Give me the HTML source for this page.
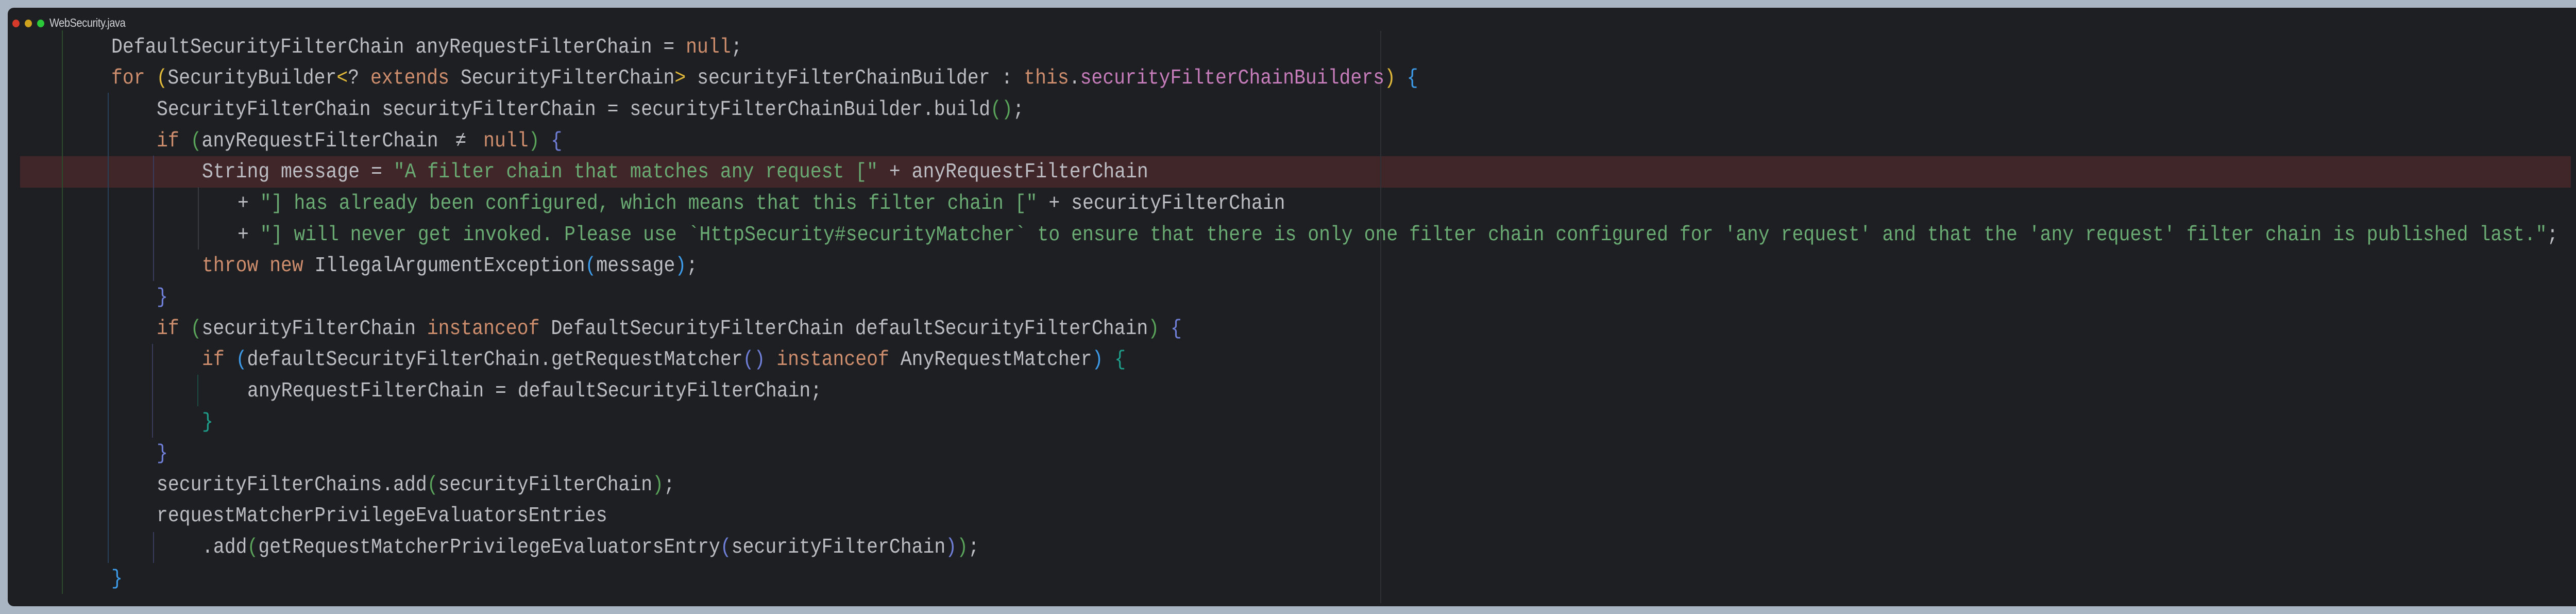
<!DOCTYPE html>
<html><head><meta charset="utf-8">
<style>
html,body{margin:0;padding:0;}
body{width:5029px;height:1191px;background:#a9b5c2;position:relative;overflow:hidden;}
.win{position:absolute;left:15px;top:15px;width:4999px;height:1161px;background:#1e1f22;border-radius:12px;overflow:hidden;}
.dot{position:absolute;top:23px;width:14px;height:15px;border-radius:50%;}
.title{position:absolute;left:81px;top:19px;font:20px "Liberation Sans",sans-serif;color:#d0d2d6;letter-spacing:-0.4px;transform:scaleY(1.15);transform-origin:left center;}
.hl{position:absolute;left:24px;top:288px;width:4951px;height:61px;background:#402529;}
.g{position:absolute;width:2px;}
.code{position:absolute;left:0;top:46.7px;font-family:"Liberation Mono",monospace;font-size:36.45px;line-height:60.65px;color:#bcbec4;white-space:pre;}
.l{position:absolute;height:60.65px;transform:scaleY(1.12);transform-origin:left center;}
.k{color:#cf8e6d}.s{color:#6aab73}.f{color:#c77dbb}
.y{color:#e0b83a}.gr{color:#5aa35a}.b{color:#3d9be9}.p{color:#6f7fd8}.t{color:#1e9e8a}
.ne{display:inline-block;width:2ch;text-align:center;}
.margin{position:absolute;left:2664px;top:45px;width:2px;height:1110px;background:#2f3136;}
</style></head><body>
<div class="win">
<div class="dot" style="left:9px;background:#d63a2a"></div>
<div class="dot" style="left:33px;background:#cfa21e"></div>
<div class="dot" style="left:57px;background:#2bc93a"></div>
<div class="title">WebSecurity.java</div>
<div class="hl"></div>
<div class="margin"></div>
<div class="g" style="left:105px;top:44px;height:1093px;background:#2c4a2c"></div>
<div class="g" style="left:194px;top:165px;height:912px;background:#28405a"></div>
<div class="g" style="left:282px;top:287px;height:243px;background:#393c5c"></div>
<div class="g" style="left:280px;top:652px;height:182px;background:#393c5c"></div>
<div class="g" style="left:282px;top:1017px;height:60px;background:#393c5c"></div>
<div class="g" style="left:369px;top:348px;height:121px;background:#393b40"></div>
<div class="g" style="left:368px;top:712px;height:61px;background:#1f4a44"></div>
<div class="code">
<div class="l" style="left:201px;top:0px">DefaultSecurityFilterChain anyRequestFilterChain = <span class="k">null</span>;</div>
<div class="l" style="left:201px;top:60.65px"><span class="k">for</span> <span class="y">(</span>SecurityBuilder<span class="y">&lt;</span>? <span class="k">extends</span> SecurityFilterChain<span class="y">&gt;</span> securityFilterChainBuilder : <span class="k">this</span>.<span class="f">securityFilterChainBuilders</span><span class="y">)</span> <span class="b">{</span></div>
<div class="l" style="left:289px;top:121.3px">SecurityFilterChain securityFilterChain = securityFilterChainBuilder.build<span class="gr">()</span>;</div>
<div class="l" style="left:289px;top:181.95px"><span class="k">if</span> <span class="gr">(</span>anyRequestFilterChain <span class="ne">≠</span> <span class="k">null</span><span class="gr">)</span> <span class="p">{</span></div>
<div class="l" style="left:377px;top:242.6px">String message = <span class="s">"A filter chain that matches any request ["</span> + anyRequestFilterChain</div>
<div class="l" style="left:446px;top:303.25px">+ <span class="s">"] has already been configured, which means that this filter chain ["</span> + securityFilterChain</div>
<div class="l" style="left:446px;top:363.9px">+ <span class="s">"] will never get invoked. Please use `HttpSecurity#securityMatcher` to ensure that there is only one filter chain configured for 'any request' and that the 'any request' filter chain is published last."</span>;</div>
<div class="l" style="left:377px;top:424.55px"><span class="k">throw new</span> IllegalArgumentException<span class="b">(</span>message<span class="b">)</span>;</div>
<div class="l" style="left:289px;top:485.2px"><span class="p">}</span></div>
<div class="l" style="left:289px;top:545.85px"><span class="k">if</span> <span class="gr">(</span>securityFilterChain <span class="k">instanceof</span> DefaultSecurityFilterChain defaultSecurityFilterChain<span class="gr">)</span> <span class="p">{</span></div>
<div class="l" style="left:377px;top:606.5px"><span class="k">if</span> <span class="b">(</span>defaultSecurityFilterChain.getRequestMatcher<span class="p">()</span> <span class="k">instanceof</span> AnyRequestMatcher<span class="b">)</span> <span class="t">{</span></div>
<div class="l" style="left:465px;top:667.15px">anyRequestFilterChain = defaultSecurityFilterChain;</div>
<div class="l" style="left:377px;top:727.8px"><span class="t">}</span></div>
<div class="l" style="left:289px;top:788.45px"><span class="p">}</span></div>
<div class="l" style="left:289px;top:849.1px">securityFilterChains.add<span class="gr">(</span>securityFilterChain<span class="gr">)</span>;</div>
<div class="l" style="left:289px;top:909.75px">requestMatcherPrivilegeEvaluatorsEntries</div>
<div class="l" style="left:377px;top:970.4px">.add<span class="gr">(</span>getRequestMatcherPrivilegeEvaluatorsEntry<span class="p">(</span>securityFilterChain<span class="p">)</span><span class="gr">)</span>;</div>
<div class="l" style="left:201px;top:1031.05px"><span class="b">}</span></div>
</div>
</div>
</body></html>
